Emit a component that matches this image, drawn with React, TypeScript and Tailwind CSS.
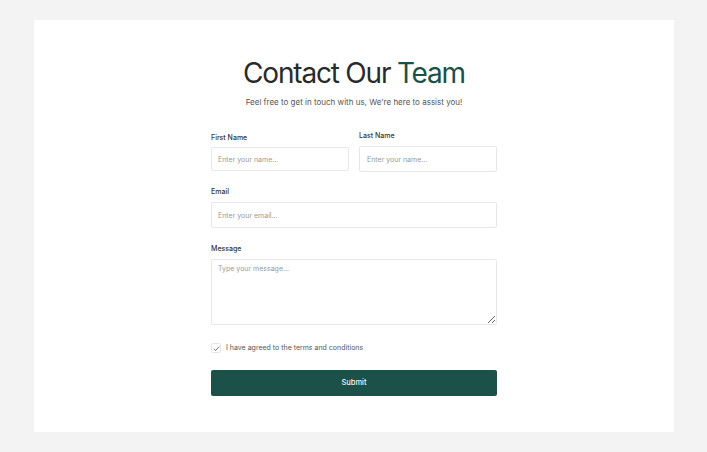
import React from 'react';

const font = { fontFamily: 'Inter, "Noto Sans", sans-serif' };

const ContactForm: React.FC = () => {
  return (
    <div className="min-h-screen bg-[#f3f3f3] pt-[20px] pl-[34px]" style={font}>
      <div className="w-[640px] h-[412px] bg-white flex flex-col items-center pt-[36px]">
        {/* Heading */}
        <h1 className="text-[28px] leading-[34px] font-normal text-[#2a2a2a] tracking-[-1.2px]">
          Contact Our <span className="text-[#1b5149]">Team</span>
        </h1>
        <p className="mt-[6px] text-[8px] leading-[12px] text-[#555]">
          Feel free to get in touch with us, We're here to assist you!
        </p>

        <form className="w-[286px] mt-[24px] flex flex-col" onSubmit={(e) => e.preventDefault()}>
          <div className="grid grid-cols-2 gap-[10px] items-start">
            <div className="flex flex-col">
              <label className="text-[7px] leading-[12px] font-medium text-[#333]">First Name</label>
              <input
                placeholder="Enter your name..."
                className="mt-[3px] h-[24px] px-[6px] border border-[#e6e8e8] rounded-[2px] text-[7px] text-[#333] placeholder:text-[#9a9a9a] outline-none"
              />
            </div>
            <div className="flex flex-col -mt-[2px]">
              <label className="text-[7px] leading-[12px] font-medium text-[#333]">Last Name</label>
              <input
                placeholder="Enter your name..."
                className="mt-[4px] h-[26px] px-[7px] border border-[#e6e8e8] rounded-[2px] text-[7px] text-[#333] placeholder:text-[#9a9a9a] outline-none"
              />
            </div>
          </div>

          <label className="mt-[14px] text-[7px] leading-[12px] font-medium text-[#333]">Email</label>
          <input
            placeholder="Enter your email..."
            className="mt-[4px] h-[26px] px-[6px] border border-[#e6e8e8] rounded-[2px] text-[7px] text-[#333] placeholder:text-[#9a9a9a] outline-none"
          />

          <label className="mt-[15px] text-[7px] leading-[12px] font-medium text-[#333]">Message</label>
          <textarea
            placeholder="Type your message..."
            className="mt-[4px] h-[66px] px-[6px] py-[4px] border border-[#e6e8e8] rounded-[2px] text-[7px] text-[#333] placeholder:text-[#9a9a9a] outline-none"
          />

          <div className="mt-[17px] flex items-center gap-[5px] h-[12px]">
            <span className="w-[10px] h-[10px] border border-[#e2e5e5] rounded-[2px] flex items-center justify-center">
              <svg width="7" height="7" viewBox="0 0 10 10" fill="none">
                <path d="M1.2 5.4 L3.8 7.8 L8.8 2.2" stroke="#3a3a3a" strokeWidth="1" />
              </svg>
            </span>
            <span className="text-[7px] leading-[12px] text-[#555]">I have agreed to the terms and conditions</span>
          </div>

          <button
            type="submit"
            className="mt-[16px] h-[26px] bg-[#1b5149] rounded-[2px] text-[#f2f5f4] text-[7.5px] font-medium"
          >
            Submit
          </button>
        </form>
      </div>
    </div>
  );
};

export default function App() {
  return <ContactForm />;
}
